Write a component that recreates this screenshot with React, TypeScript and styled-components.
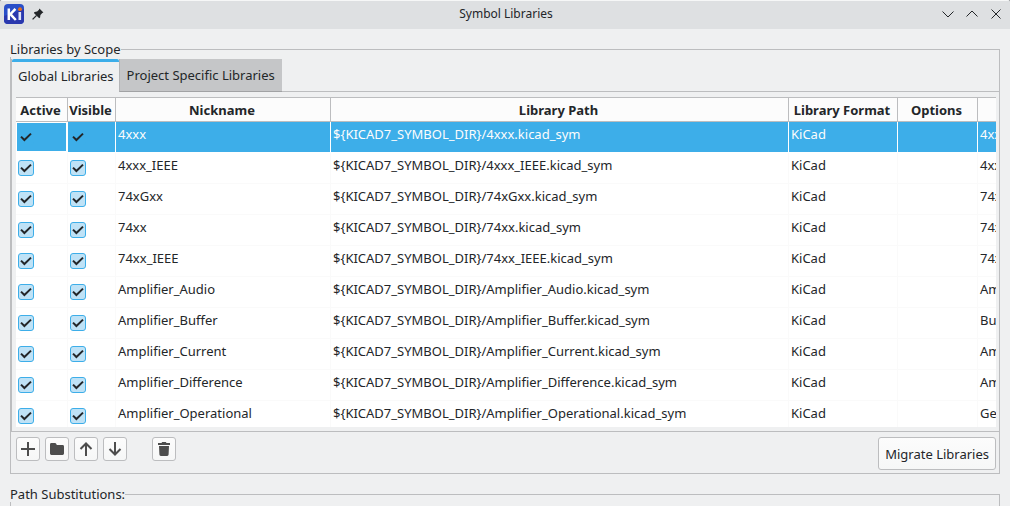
import React from "react";
import styled, { createGlobalStyle, css } from "styled-components";

const color = {
  ink: "#232629",
  window: "#eff0f1",
  title: "#dee0e2",
  line: "#bcbdbf",
  accent: "#3daee9",
  glyph: "#4d4d4d",
};

const GlobalStyle = createGlobalStyle`
  *, *::before, *::after { box-sizing: border-box; }
  html, body { margin: 0; height: 100%; }
  body {
    overflow: hidden;
    background: #8e9092;
    color: ${color.ink};
    font: 13px/18px "Noto Sans", "Open Sans", sans-serif;
  }
  #root { height: 100%; }
  button, input { font: inherit; color: inherit; margin: 0; }
`;

const Window = styled.div`
  height: 100%;
  overflow: hidden;
  background: ${color.window};
  border-radius: 3px 3px 0 0;
`;

const TitleBar = styled.header`
  display: grid;
  grid-template-columns: 1fr auto 1fr;
  align-items: center;
  height: 29px;
  padding: 0 2px 2px 4px;
  background: ${color.title};
  border-top: 1px solid #f6f7f7;
`;

const TitleGroup = styled.div<{ $end?: boolean }>`
  display: flex;
  align-items: center;
  gap: ${(p) => (p.$end ? "0" : "2px")};
  justify-content: ${(p) => (p.$end ? "flex-end" : "flex-start")};
`;

const Title = styled.h1`
  margin: 0;
  font-size: 12px;
  font-weight: 400;
`;

const TitleButton = styled.button`
  display: grid;
  place-items: center;
  width: 24px;
  height: 24px;
  padding: 0;
  border: 0;
  background: none;
`;

const Content = styled.main`
  display: flex;
  flex-direction: column;
  gap: 12px;
  padding: 12px 10px;
`;

const Group = styled.fieldset`
  min-width: 0;
  min-height: 48px;
  margin: 0;
  padding: 2px 0 0;
  border: 1px solid ${color.line};
`;

const GroupLabel = styled.legend`
  margin-left: -1px;
  padding: 0;
  line-height: 16px;
  background: ${color.window};
`;

const Notebook = styled.div`
  border-left: 1px solid ${color.line};
  border-bottom: 1px solid ${color.line};
`;

const TabList = styled.div`
  display: flex;
  height: 33px;

  &::after {
    content: "";
    flex: 1;
    border-bottom: 1px solid ${color.line};
  }
`;

const Tab = styled.button<{ $active?: boolean }>`
  border: 0;
  white-space: nowrap;
  ${(p) =>
    p.$active
      ? css`
          padding: 0 5px 2px 6px;
          background: ${color.window};
          border-top: 3px solid ${color.accent};
          border-radius: 2px 2px 0 0;
        `
      : css`
          padding: 0 7px 0 7px;
          background: #c5c6c8;
          border-left: 1px solid #b4b5b7;
          border-bottom: 1px solid #a1a2a4;
        `}
`;

const TabPanel = styled.div`
  padding: 5px 3px 4px 4px;
`;

const GridViewport = styled.div`
  height: 330px;
  overflow: hidden;
  background: #fff;
`;

const LibraryTable = styled.table`
  width: 100%;
  table-layout: fixed;
  border-collapse: separate;
  border-spacing: 0;
`;

const Column = styled.col<{ $width?: number }>`
  width: ${(p) => (p.$width ? `${p.$width}px` : "auto")};
`;

const HeadCell = styled.th`
  height: 25px;
  padding: 0 2px 0 0;
  overflow: hidden;
  white-space: nowrap;
  font-weight: 700;
  background: #fcfcfc;
  border: 1px solid ${color.line};
  border-left: 0;

  &:last-child {
    border-right: 0;
  }
`;

const Cell = styled.td`
  height: 31px;
  padding: 3px 2px 0;
  overflow: hidden;
  white-space: nowrap;
  vertical-align: top;
  border-right: 1px solid #fafafa;
  border-bottom: 1px solid #fafafa;

  &:last-child {
    border-right: 0;
  }
`;

const CheckCell = styled(Cell)`
  padding-top: 7px;
`;

const Row = styled.tr<{ $selected?: boolean }>`
  ${(p) =>
    p.$selected &&
    css`
      color: #fcfcfc;

      ${Cell} {
        background: ${color.accent};
        border-color: #fff;
      }

      ${Cell}:first-child {
        box-shadow: inset 0 0 0 1px #fff;
      }
    `}
`;

const CheckBox = styled.span`
  display: grid;
  width: 16px;
  height: 16px;

  & > * {
    grid-area: 1 / 1;
  }

  & > svg {
    pointer-events: none;
  }
`;

const CheckInput = styled.input<{ $plain?: boolean }>`
  appearance: none;
  width: 16px;
  height: 16px;
  border: 1px solid ${color.accent};
  border-radius: 3px;
  background: ${(p) => (p.$plain ? color.accent : "#bfe2f6")};
`;

const Actions = styled.div`
  display: flex;
  align-items: flex-start;
  gap: 5px;
  padding: 5px 3px 3px 5px;
`;

const PushButton = styled.button`
  height: 33px;
  padding: 0 6px;
  white-space: nowrap;
  background: linear-gradient(#fcfcfc, #f6f7f7);
  border: 1px solid ${color.line};
  border-radius: 3px;
`;

const ToolButton = styled(PushButton)`
  display: grid;
  place-items: center;
  width: 24px;
  height: 24px;
  padding: 0;
`;

const Separator = styled.span`
  width: 15px;
`;

const Spacer = styled.span`
  flex: 1;
`;

function KiCadLogo() {
  return (
    <svg width="20" height="20" viewBox="0 0 20 20" aria-hidden="true">
      <rect width="20" height="20" rx="4" fill="#2a4fc8" />
      <path d="M0 12 L20 5 V16 a4 4 0 0 1 -4 4 H4 a4 4 0 0 1 -4 -4 Z" fill="#2a38ae" />
      <path d="M4.8 4.5 V16 M11.4 4.8 L6.4 10.2 L11.8 16" fill="none" stroke="#fff" strokeWidth="2.5" />
      <path d="M15.8 8 V16" stroke="#dfe4f8" strokeWidth="2.6" />
      <circle cx="16" cy="5.2" r="1.9" fill="#e8701a" />
    </svg>
  );
}

function PinIcon() {
  return (
    <svg width="12" height="12" viewBox="0 0 12 12" aria-hidden="true">
      <path d="M7.4 0.6 L11.4 4.6 L10.3 5.1 L8.4 7 L8.1 9.6 L7.2 10.2 L1.9 4.9 L2.5 4 L5.1 3.6 L7 1.7 Z" fill={color.ink} />
      <path d="M4.6 7.4 L0.6 11.4" stroke={color.ink} strokeWidth="1.3" />
    </svg>
  );
}

function StrokeIcon({ d, size = 12, width = 1, stroke = color.ink }: { d: string; size?: number; width?: number; stroke?: string }) {
  return (
    <svg width={size} height={size} viewBox={`0 0 ${size} ${size}`} fill="none" stroke={stroke} strokeWidth={width} aria-hidden="true">
      <path d={d} />
    </svg>
  );
}

function FolderIcon() {
  return (
    <svg width="16" height="16" viewBox="0 0 16 16" fill={color.glyph} aria-hidden="true">
      <path d="M1 3.4 Q1 2 2.4 2 H6 Q6.8 2 7.2 2.8 L7.8 4 H13.6 Q15 4 15 5.4 V12.6 Q15 14 13.6 14 H2.4 Q1 14 1 12.6 Z" />
    </svg>
  );
}

function TrashIcon() {
  return (
    <svg width="16" height="16" viewBox="0 0 16 16" fill={color.glyph} aria-hidden="true">
      <path d="M2 2 H5.5 L6.2 1 H9.8 L10.5 2 H14 V4 H2 Z M3 5 H13 L12.6 13.6 Q12.5 15 11.2 15 H4.8 Q3.5 15 3.4 13.6 Z" />
    </svg>
  );
}

function Check({ label, plain }: { label: string; plain?: boolean }) {
  return (
    <CheckBox>
      <CheckInput type="checkbox" defaultChecked aria-label={label} $plain={plain} />
      <StrokeIcon size={16} width={2} d="M3 7.6 L6.4 11 L13 4.6" />
    </CheckBox>
  );
}

const libraries: [string, string][] = [
  ["4xxx", "4xxx series symbols"],
  ["4xxx_IEEE", "4xxx series IEEE symbols"],
  ["74xGxx", "74xGxx symbols"],
  ["74xx", "74xx symbols"],
  ["74xx_IEEE", "74xx series IEEE symbols"],
  ["Amplifier_Audio", "Amplifiers, audio"],
  ["Amplifier_Buffer", "Buffer amplifiers"],
  ["Amplifier_Current", "Amplifiers, current"],
  ["Amplifier_Difference", "Amplifiers, difference"],
  ["Amplifier_Operational", "General operational amplifiers"],
];

export default function App() {
  return (
    <>
      <GlobalStyle />
      <Window>
        <TitleBar>
          <TitleGroup>
            <KiCadLogo />
            <TitleButton aria-label="Keep above">
              <PinIcon />
            </TitleButton>
          </TitleGroup>
          <Title>Symbol Libraries</Title>
          <TitleGroup $end>
            <TitleButton aria-label="Minimize">
              <StrokeIcon d="M0.5 3.5 L6 9 L11.5 3.5" />
            </TitleButton>
            <TitleButton aria-label="Maximize">
              <StrokeIcon d="M0.5 8.5 L6 3 L11.5 8.5" />
            </TitleButton>
            <TitleButton aria-label="Close">
              <StrokeIcon d="M1.5 1.5 L10.5 10.5 M10.5 1.5 L1.5 10.5" />
            </TitleButton>
          </TitleGroup>
        </TitleBar>

        <Content>
          <Group>
            <GroupLabel>Libraries by Scope</GroupLabel>
            <Notebook>
              <TabList role="tablist">
                <Tab role="tab" aria-selected="true" $active>
                  Global Libraries
                </Tab>
                <Tab role="tab" aria-selected="false">
                  Project Specific Libraries
                </Tab>
              </TabList>
              <TabPanel role="tabpanel">
                <GridViewport>
                  <LibraryTable>
                    <colgroup>
                      <Column $width={52} />
                      <Column $width={48} />
                      <Column $width={215} />
                      <Column />
                      <Column $width={109} />
                      <Column $width={80} />
                      <Column $width={18} />
                    </colgroup>
                    <thead>
                      <tr>
                        <HeadCell>Active</HeadCell>
                        <HeadCell>Visible</HeadCell>
                        <HeadCell>Nickname</HeadCell>
                        <HeadCell>Library Path</HeadCell>
                        <HeadCell>Library Format</HeadCell>
                        <HeadCell>Options</HeadCell>
                        <HeadCell />
                      </tr>
                    </thead>
                    <tbody>
                      {libraries.map(([name, description], index) => (
                        <Row key={name} $selected={index === 0}>
                          <CheckCell>
                            <Check label={`${name} active`} plain={index === 0} />
                          </CheckCell>
                          <CheckCell>
                            <Check label={`${name} visible`} plain={index === 0} />
                          </CheckCell>
                          <Cell>{name}</Cell>
                          <Cell>{`\${KICAD7_SYMBOL_DIR}/${name}.kicad_sym`}</Cell>
                          <Cell>KiCad</Cell>
                          <Cell />
                          <Cell>{description}</Cell>
                        </Row>
                      ))}
                    </tbody>
                  </LibraryTable>
                </GridViewport>
              </TabPanel>
            </Notebook>
            <Actions>
              <ToolButton aria-label="Add row">
                <StrokeIcon size={16} width={2} stroke={color.glyph} d="M8 1 V15 M1 8 H15" />
              </ToolButton>
              <ToolButton aria-label="Add existing library">
                <FolderIcon />
              </ToolButton>
              <ToolButton aria-label="Move up">
                <StrokeIcon size={16} width={2} stroke={color.glyph} d="M8 15 V3 M2.5 8 L8 2.5 L13.5 8" />
              </ToolButton>
              <ToolButton aria-label="Move down">
                <StrokeIcon size={16} width={2} stroke={color.glyph} d="M8 1 V13 M2.5 8 L8 13.5 L13.5 8" />
              </ToolButton>
              <Separator />
              <ToolButton aria-label="Remove library">
                <TrashIcon />
              </ToolButton>
              <Spacer />
              <PushButton>Migrate Libraries</PushButton>
            </Actions>
          </Group>

          <Group>
            <GroupLabel>Path Substitutions:</GroupLabel>
          </Group>
        </Content>
      </Window>
    </>
  );
}
